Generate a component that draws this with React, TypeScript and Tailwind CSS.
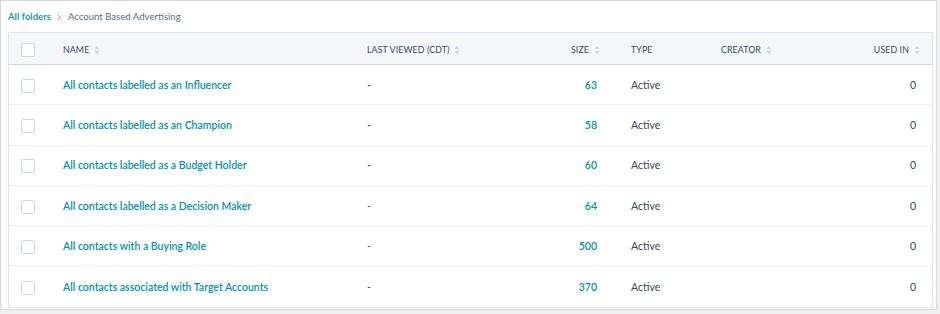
import React from 'react'

const rows = [
  { name: 'All contacts labelled as an Influencer', size: 63 },
  { name: 'All contacts labelled as an Champion', size: 58 },
  { name: 'All contacts labelled as a Budget Holder', size: 60 },
  { name: 'All contacts labelled as a Decision Maker', size: 64 },
  { name: 'All contacts with a Buying Role', size: 500 },
  { name: 'All contacts associated with Target Accounts', size: 370 },
]

function SortIcon() {
  return (
    <svg width="6" height="10" viewBox="0 0 6 10" className="ml-[5px] shrink-0">
      <path d="M3 0.5 L5.6 4 H0.4 Z" fill="#cbd6e2" />
      <path d="M3 9.5 L5.6 6 H0.4 Z" fill="#cbd6e2" />
    </svg>
  )
}

function Checkbox() {
  return <div className="w-[14px] h-[14px] rounded-[2px] border border-[#cbd6e2] bg-white" />
}

export default function App() {
  return (
    <div className="w-[940px] h-[314px] bg-[#f0f0f0]" style={{ fontFamily: 'Lato, "Open Sans", sans-serif' }}>
      <div className="w-[937px] h-[310px] bg-white border border-[#d6d6d6] pl-[7px] pr-[3px]">
        <div className="h-[31px] pt-[2px] flex items-center text-[9.6px] gap-[6px]">
          <span className="text-[#0091ae] font-semibold">All folders</span>
          <svg width="5" height="7" viewBox="0 0 5 7">
            <path d="M1 1 L3.5 3.5 L1 6" stroke="#7c98b6" strokeWidth="1" fill="none" />
          </svg>
          <span className="text-[#516f90]">Account Based Advertising</span>
        </div>

        <div className="border border-[#dfe3eb] text-[#33475b]">
          <div className="h-[32px] pt-[2px] flex items-center bg-[#f5f8fa] border-b border-[#cbd6e2] text-[8.8px] uppercase tracking-[0.1px]">
            <div className="w-[40px] pl-[12px] flex items-center"><Checkbox /></div>
            <div className="w-[304px] pl-[14px] flex items-center">Name<SortIcon /></div>
            <div className="w-[200px] pl-[14px] flex items-center">Last viewed (CDT)<SortIcon /></div>
            <div className="w-[64px] pr-[17px] flex items-center justify-end">Size<SortIcon /></div>
            <div className="w-[89px] pl-[14px] flex items-center">Type</div>
            <div className="w-[100px] pl-[15px] flex items-center">Creator<SortIcon /></div>
            <div className="flex-1 pr-[12px] flex items-center justify-end">Used in<SortIcon /></div>
          </div>
          {rows.map((r, i) => (
            <div
              key={r.name}
              className={`h-[40.3px] pt-[2px] flex items-center text-[10.5px] ${i < rows.length - 1 ? 'border-b border-[#eaf0f6]' : ''}`}
            >
              <div className="w-[40px] pl-[12px] flex items-center"><Checkbox /></div>
              <div className="w-[304px] pl-[14px] font-semibold text-[#0091ae]">{r.name}</div>
              <div className="w-[200px] pl-[14px]">-</div>
              <div className="w-[64px] pr-[20px] text-right font-semibold text-[#0091ae]">{r.size}</div>
              <div className="w-[89px] pl-[14px]">Active</div>
              <div className="w-[100px] pl-[15px]"></div>
              <div className="flex-1 pr-[16px] text-right">0</div>
            </div>
          ))}
        </div>
      </div>
    </div>
  )
}
